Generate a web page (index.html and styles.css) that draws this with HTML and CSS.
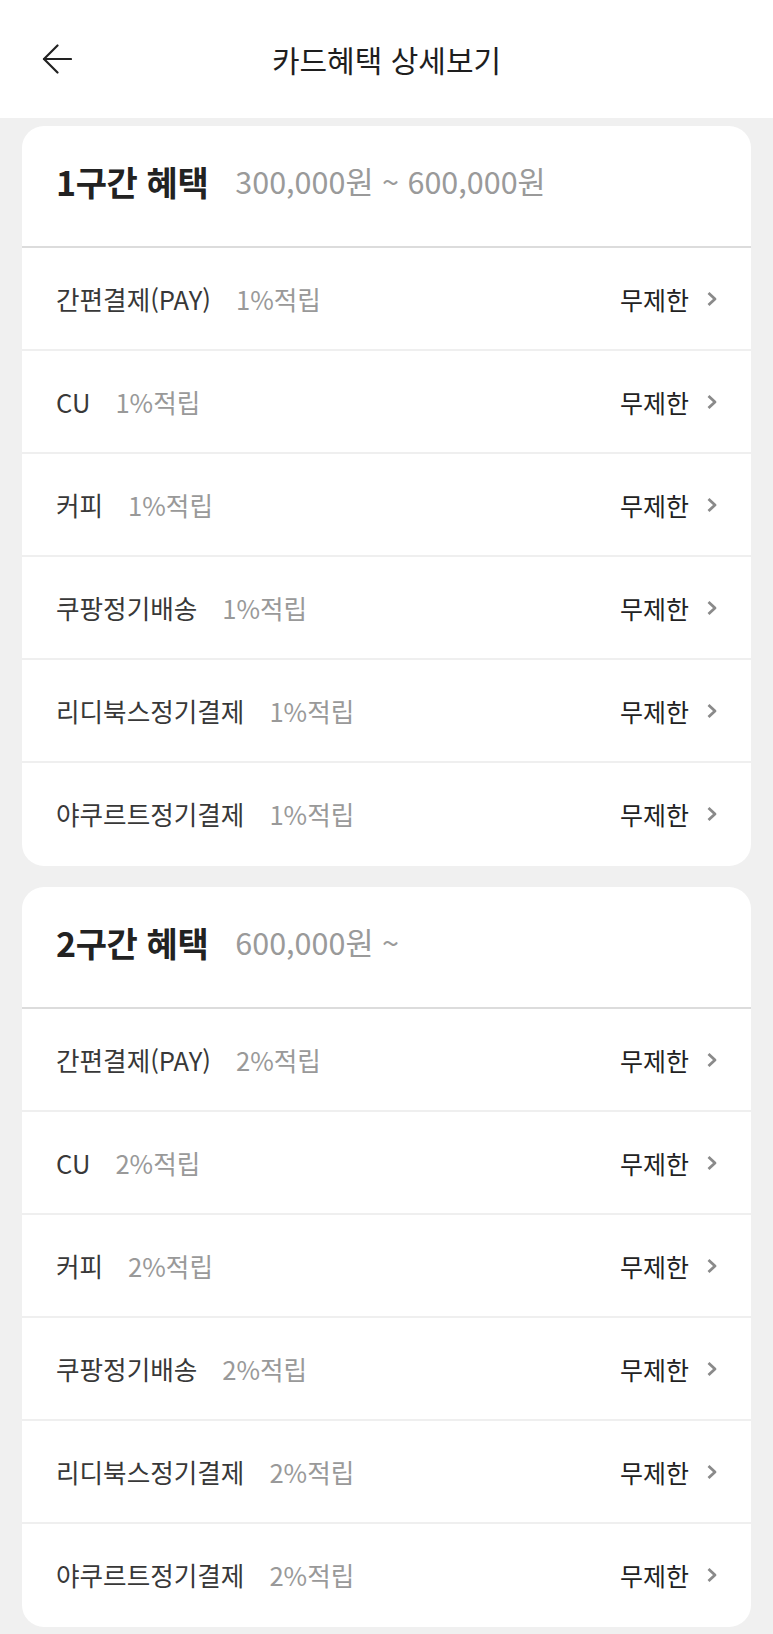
FILE: index.html
```html
<!DOCTYPE html>
<html lang="ko">
<head>
<meta charset="utf-8">
<title>카드혜택 상세보기</title>
<link rel="stylesheet" href="styles.css">
</head>
<body>
<header class="topbar">
  <button class="back" aria-label="뒤로">
    <svg width="30" height="30" viewBox="0 0 30 30" fill="none" stroke="#222" stroke-width="2.2" stroke-linecap="round" stroke-linejoin="round">
      <path d="M2 15 H29"/>
      <path d="M15.5 1.5 L2 15 L15.5 28.5"/>
    </svg>
  </button>
  <h1 class="title">카드혜택 상세보기</h1>
  <span></span>
</header>

<main class="content">
  <section class="card">
    <div class="card-head">
      <h2 class="tier">1구간 혜택</h2>
      <span class="range">300,000원 ~ 600,000원</span>
    </div>
    <ul class="rows">
      <li class="row"><span class="label">간편결제(PAY)</span><span class="rate">1%적립</span><span class="limit">무제한</span><svg class="chev" width="12" height="16" viewBox="0 0 12 16"><path d="M2.5 2 L9 8 L2.5 14" fill="none" stroke="#8a8a8a" stroke-width="2.8" stroke-linejoin="round"/></svg></li>
      <li class="row"><span class="label">CU</span><span class="rate">1%적립</span><span class="limit">무제한</span><svg class="chev" width="12" height="16" viewBox="0 0 12 16"><path d="M2.5 2 L9 8 L2.5 14" fill="none" stroke="#8a8a8a" stroke-width="2.8" stroke-linejoin="round"/></svg></li>
      <li class="row"><span class="label">커피</span><span class="rate">1%적립</span><span class="limit">무제한</span><svg class="chev" width="12" height="16" viewBox="0 0 12 16"><path d="M2.5 2 L9 8 L2.5 14" fill="none" stroke="#8a8a8a" stroke-width="2.8" stroke-linejoin="round"/></svg></li>
      <li class="row"><span class="label">쿠팡정기배송</span><span class="rate">1%적립</span><span class="limit">무제한</span><svg class="chev" width="12" height="16" viewBox="0 0 12 16"><path d="M2.5 2 L9 8 L2.5 14" fill="none" stroke="#8a8a8a" stroke-width="2.8" stroke-linejoin="round"/></svg></li>
      <li class="row"><span class="label">리디북스정기결제</span><span class="rate">1%적립</span><span class="limit">무제한</span><svg class="chev" width="12" height="16" viewBox="0 0 12 16"><path d="M2.5 2 L9 8 L2.5 14" fill="none" stroke="#8a8a8a" stroke-width="2.8" stroke-linejoin="round"/></svg></li>
      <li class="row"><span class="label">야쿠르트정기결제</span><span class="rate">1%적립</span><span class="limit">무제한</span><svg class="chev" width="12" height="16" viewBox="0 0 12 16"><path d="M2.5 2 L9 8 L2.5 14" fill="none" stroke="#8a8a8a" stroke-width="2.8" stroke-linejoin="round"/></svg></li>
    </ul>
  </section>

  <section class="card">
    <div class="card-head">
      <h2 class="tier">2구간 혜택</h2>
      <span class="range">600,000원 ~</span>
    </div>
    <ul class="rows">
      <li class="row"><span class="label">간편결제(PAY)</span><span class="rate">2%적립</span><span class="limit">무제한</span><svg class="chev" width="12" height="16" viewBox="0 0 12 16"><path d="M2.5 2 L9 8 L2.5 14" fill="none" stroke="#8a8a8a" stroke-width="2.8" stroke-linejoin="round"/></svg></li>
      <li class="row"><span class="label">CU</span><span class="rate">2%적립</span><span class="limit">무제한</span><svg class="chev" width="12" height="16" viewBox="0 0 12 16"><path d="M2.5 2 L9 8 L2.5 14" fill="none" stroke="#8a8a8a" stroke-width="2.8" stroke-linejoin="round"/></svg></li>
      <li class="row"><span class="label">커피</span><span class="rate">2%적립</span><span class="limit">무제한</span><svg class="chev" width="12" height="16" viewBox="0 0 12 16"><path d="M2.5 2 L9 8 L2.5 14" fill="none" stroke="#8a8a8a" stroke-width="2.8" stroke-linejoin="round"/></svg></li>
      <li class="row"><span class="label">쿠팡정기배송</span><span class="rate">2%적립</span><span class="limit">무제한</span><svg class="chev" width="12" height="16" viewBox="0 0 12 16"><path d="M2.5 2 L9 8 L2.5 14" fill="none" stroke="#8a8a8a" stroke-width="2.8" stroke-linejoin="round"/></svg></li>
      <li class="row"><span class="label">리디북스정기결제</span><span class="rate">2%적립</span><span class="limit">무제한</span><svg class="chev" width="12" height="16" viewBox="0 0 12 16"><path d="M2.5 2 L9 8 L2.5 14" fill="none" stroke="#8a8a8a" stroke-width="2.8" stroke-linejoin="round"/></svg></li>
      <li class="row"><span class="label">야쿠르트정기결제</span><span class="rate">2%적립</span><span class="limit">무제한</span><svg class="chev" width="12" height="16" viewBox="0 0 12 16"><path d="M2.5 2 L9 8 L2.5 14" fill="none" stroke="#8a8a8a" stroke-width="2.8" stroke-linejoin="round"/></svg></li>
    </ul>
  </section>
</main>
</body>
</html>
```

FILE: styles.css
```css
* {
  box-sizing: border-box;
}

html, body {
  margin: 0;
  padding: 0;
}

body {
  background: #f0f0f0;
  font-family: "Noto Sans CJK KR", "Noto Sans", sans-serif;
  color: #222;
}

.topbar {
  height: 118px;
  background: #fff;
  display: grid;
  grid-template-columns: 1fr auto 1fr;
  align-items: center;
}

.back {
  justify-self: start;
  margin-left: 42px;
  padding: 0;
  border: 0;
  background: none;
  width: 30px;
  height: 30px;
  display: flex;
}

.title {
  margin: 0;
  font-size: 30px;
  font-weight: 400;
  color: #1e1e1e;
}

.content {
  padding: 8px 22px 7px;
  display: flex;
  flex-direction: column;
  gap: 21px;
}

.card {
  background: #fff;
  border-radius: 22px;
  overflow: hidden;
  padding-bottom: 2px;
}

.card-head {
  height: 122px;
  border-bottom: 2px solid #dcdcdc;
  display: flex;
  align-items: center;
  padding: 0 34px 10px 34px;
  gap: 27px;
}

.tier {
  margin: 0;
  font-size: 34px;
  font-weight: 700;
  color: #222;
  letter-spacing: -0.4px;
}

.range {
  font-size: 30.5px;
  color: #9a9a9a;
}

.rows {
  list-style: none;
  margin: 0;
  padding: 0;
}

.row {
  height: 101px;
  display: flex;
  align-items: center;
  padding: 0 33px 0 34px;
  font-size: 25.6px;
}

.row + .row {
  height: 103px;
  border-top: 2px solid #efefef;
}

.label {
  color: #383838;
}

.rate {
  margin-left: 25px;
  color: #999;
}

.limit {
  margin-left: auto;
  font-size: 25px;
  color: #222;
}

.chev {
  margin-left: 17px;
}
```
